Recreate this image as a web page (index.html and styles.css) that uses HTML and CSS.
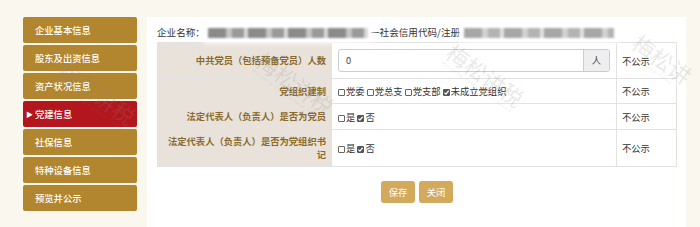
FILE: index.html
```html
<!DOCTYPE html>
<html lang="zh-CN">
<head>
<meta charset="utf-8">
<link rel="stylesheet" href="styles.css">
</head>
<body>
<div class="page">
  <ul class="side">
    <li class="item">企业基本信息</li>
    <li class="item">股东及出资信息</li>
    <li class="item">资产状况信息</li>
    <li class="item active"><span class="arrow">▶</span>党建信息</li>
    <li class="item">社保信息</li>
    <li class="item">特种设备信息</li>
    <li class="item">预览并公示</li>
  </ul>
  <div class="panel">
    <div class="title">
      <span>企业名称：</span><span class="blur b1"></span><span class="mid">一社会信用代码/注册</span><span class="blur b2"></span>
    </div>
    <table class="form">
      <tr class="r1">
        <th>中共党员（包括预备党员）人数</th>
        <td class="val">
          <div class="group"><div class="inp">0</div><div class="addon">人</div></div>
        </td>
        <td class="pub">不公示</td>
      </tr>
      <tr class="r2">
        <th>党组织建制</th>
        <td class="val">
          <span class="cb"></span>党委 <span class="cb"></span>党总支 <span class="cb"></span>党支部 <span class="cb on"><svg viewBox="0 0 8 8"><path d="M1.6 4.2 L3.3 5.9 L6.5 2" fill="none" stroke="#fff" stroke-width="1.4"/></svg></span>未成立党组织
        </td>
        <td class="pub">不公示</td>
      </tr>
      <tr class="r3">
        <th>法定代表人（负责人）是否为党员</th>
        <td class="val">
          <span class="cb"></span>是 <span class="cb on"><svg viewBox="0 0 8 8"><path d="M1.6 4.2 L3.3 5.9 L6.5 2" fill="none" stroke="#fff" stroke-width="1.4"/></svg></span>否
        </td>
        <td class="pub">不公示</td>
      </tr>
      <tr class="r4">
        <th>法定代表人（负责人）是否为党组织书记</th>
        <td class="val">
          <span class="cb"></span>是 <span class="cb on"><svg viewBox="0 0 8 8"><path d="M1.6 4.2 L3.3 5.9 L6.5 2" fill="none" stroke="#fff" stroke-width="1.4"/></svg></span>否
        </td>
        <td class="pub">不公示</td>
      </tr>
    </table>
    <div class="btns">
      <button class="btn">保存</button>
      <button class="btn">关闭</button>
    </div>
  </div>
</div>
<div class="wm w1">梅松讲税<small>Meisong Talks About Taxes</small></div>
<div class="wm w2">梅松讲税<small>Meisong Talks About Taxes</small></div>
<div class="wm w3">梅松讲税<small>Meisong Talks About Taxes</small></div>
<div class="wm w4">梅松讲<small>Meisong Talks</small></div>
</body>
</html>
```
FILE: styles.css
```css
* { box-sizing: border-box; }
html, body { margin: 0; padding: 0; }
body {
  background: #faf7ee;
  font-family: "Noto Sans CJK SC", "Noto Sans", sans-serif;
  font-size: 9.3px;
  color: #333;
  width: 700px;
  height: 227px;
  overflow: hidden;
  position: relative;
}
.page {
  display: flex;
  align-items: flex-start;
  padding: 17px 0 0 23px;
  gap: 10px;
}
.side {
  list-style: none;
  margin: 0;
  padding: 0;
  width: 114px;
  display: flex;
  flex-direction: column;
  gap: 2px;
}
.item {
  height: 26px;
  line-height: 26px;
  background: #b2852f;
  color: #fff;
  padding-left: 12px;
  border-radius: 2px;
  font-weight: 500;
  position: relative;
}
.item.active { background: #b3161c; }
.arrow {
  position: absolute;
  left: 3px;
  top: 0;
  font-size: 7px;
}
.panel {
  background: #fff;
  width: 539px;
  height: 220px;
  padding: 6px 9px 0 10px;
}
.title {
  height: 19px;
  line-height: 19px;
  font-size: 9.6px;
  display: flex;
  align-items: center;
  white-space: nowrap;
}
.blur {
  display: inline-block;
  height: 10px;
  filter: blur(1.2px);
  background: repeating-linear-gradient(90deg, #8a8a8a 0 18px, #c4c4c4 18px 24px, #9a9a9a 24px 36px, #d8d8d8 36px 40px);
  box-shadow: 0 0 5px 5px #fff;
}
.b1 { width: 160px; margin-left: 3px; }
.b2 { width: 150px; margin-left: 4px; opacity: 0.75; }
.mid { margin-left: 2px; }
.form {
  width: 520px;
  border-collapse: collapse;
  table-layout: fixed;
}
.form th, .form td { border: 1px solid #e2e2e2; }
.form th {
  width: 174px;
  background: #e9e2da;
  color: #8a6a2c;
  font-weight: bold;
  text-align: right;
  padding: 0 5px 0 6px;
  line-height: 13px;
}
.form td.val { width: 285px; padding: 0 6px; white-space: nowrap; }
.form td.pub { padding: 0 5px; }
.r1 { height: 36px; }
.r2 { height: 25px; }
.r3 { height: 26px; }
.r4 { height: 37px; }
.group {
  display: flex;
  width: 272px;
  height: 23px;
  border: 1px solid #ccc;
  border-radius: 3px;
  overflow: hidden;
}
.inp { flex: 1; line-height: 21px; padding-left: 7px; color: #444; }
.addon {
  width: 26px;
  border-left: 1px solid #ccc;
  background: #eee;
  text-align: center;
  line-height: 21px;
  color: #444;
}
.cb {
  display: inline-block;
  width: 7px;
  height: 7px;
  border: 1px solid #666;
  border-radius: 1px;
  background: #fff;
  vertical-align: -1px;
  margin-right: 1px;
  position: relative;
}
.cb.on { background: #555; border-color: #555; }
.cb svg { position: absolute; left: -1px; top: -1px; width: 7px; height: 7px; }
.btns {
  display: flex;
  justify-content: center;
  gap: 4px;
  margin-top: 14px;
  width: 520px;
}
.btn {
  width: 34px;
  height: 22px;
  border: none;
  border-radius: 3px;
  background: #d3a95c;
  color: #fff;
  font-family: inherit;
  font-size: 9.3px;
  padding: 0;
}
.wm {
  position: absolute;
  color: rgba(140, 140, 140, 0.2);
  font-size: 22px;
  font-weight: normal;
  transform: rotate(36deg);
  text-align: center;
  line-height: 24px;
  pointer-events: none;
  white-space: nowrap;
}
.wm small {
  display: block;
  font-family: "Liberation Sans", sans-serif;
  font-size: 5px;
  line-height: 6px;
  letter-spacing: 1px;
}
.w1 { left: 52px; top: 80px; }
.w2 { left: 250px; top: 70px; }
.w3 { left: 440px; top: 62px; }
.w4 { left: 628px; top: 46px; }
```
